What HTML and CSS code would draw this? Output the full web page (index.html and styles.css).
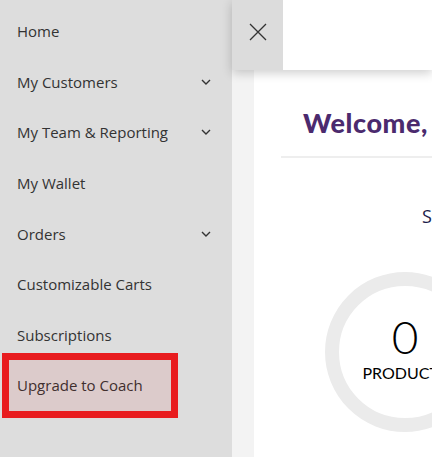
FILE: index.html
```html
<!DOCTYPE html>
<html>
<head>
<meta charset="utf-8">
<link rel="stylesheet" href="styles.css">
</head>
<body>
<div class="app">
  <nav class="sidebar">
    <div class="item">Home</div>
    <div class="item">My Customers<svg class="chev" viewBox="0 0 10 6"><path d="M1 1 L5 5 L9 1" /></svg></div>
    <div class="item">My Team &amp; Reporting<svg class="chev" viewBox="0 0 10 6"><path d="M1 1 L5 5 L9 1" /></svg></div>
    <div class="item">My Wallet</div>
    <div class="item">Orders<svg class="chev" viewBox="0 0 10 6"><path d="M1 1 L5 5 L9 1" /></svg></div>
    <div class="item">Customizable Carts</div>
    <div class="item">Subscriptions</div>
    <div class="item highlight">Upgrade to Coach</div>
  </nav>
  <div class="main">
    <header class="topbar">
      <div class="close">
        <svg viewBox="0 0 18 18" width="18" height="18"><path d="M1 1 L17 17 M17 1 L1 17" /></svg>
      </div>
      <div class="topfill"></div>
    </header>
    <div class="body">
      <div class="gutter"></div>
      <div class="content">
        <div class="card">
          <h1 class="welcome">Welcome,</h1>
          <div class="divider"></div>
          <div class="sub">S</div>
          <div class="ring">
            <div class="num">0</div>
            <div class="label">PRODUCTS</div>
          </div>
        </div>
      </div>
    </div>
  </div>
</div>
</body>
</html>
```
FILE: styles.css
```css
html, body {
  margin: 0;
  padding: 0;
  width: 432px;
  height: 457px;
  overflow: hidden;
  background: #fff;
}
.app {
  display: flex;
  height: 457px;
}
.sidebar {
  width: 232px;
  flex: 0 0 232px;
  background: #dddddd;
  padding-top: 6px;
  box-sizing: border-box;
}
.item {
  position: relative;
  height: 50.6px;
  display: flex;
  align-items: center;
  justify-content: space-between;
  padding: 0 21px 0 17px;
  font-family: "Open Sans", sans-serif;
  font-size: 15px;
  color: #333;
}
.chev {
  width: 10px;
  height: 6px;
  fill: none;
  stroke: #333;
  stroke-width: 1.4;
}
.highlight::after {
  content: "";
  position: absolute;
  left: 2px;
  top: -7px;
  width: 176px;
  height: 65px;
  box-sizing: border-box;
  border: 7px solid #e81c1f;
  background: rgba(220, 0, 0, 0.08);
}
.main {
  flex: 1;
  display: flex;
  flex-direction: column;
  min-width: 0;
}
.topbar {
  height: 70px;
  flex: 0 0 70px;
  display: flex;
  position: relative;
  z-index: 2;
  box-shadow: 0 3px 10px rgba(0,0,0,0.2);
}
.close {
  width: 51px;
  background: #dcdcdc;
  display: flex;
  align-items: center;
  justify-content: center;
  padding-bottom: 6px;
  box-sizing: border-box;
}
.close svg {
  fill: none;
  stroke: #333;
  stroke-width: 1.3;
}
.topfill {
  flex: 1;
  background: #fff;
}
.body {
  flex: 1;
  display: flex;
  min-height: 0;
}
.gutter {
  width: 22px;
  background: #f3f3f3;
}
.content {
  flex: 1;
  background: #fff;
  padding-left: 27px;
  overflow: hidden;
}
.card {
  width: 300px;
}
.welcome {
  margin: 37px 0 0 22px;
  font-family: "Lato", sans-serif;
  font-weight: 900;
  font-size: 27px;
  line-height: 32px;
  color: #4b2a6e;
  letter-spacing: 0.6px;
}
.divider {
  margin-top: 17px;
  height: 2px;
  background: #eeeeee;
}
.sub {
  margin: 46px 0 0 141px;
  font-family: "Open Sans", sans-serif;
  font-size: 18px;
  color: #1c1c4a;
  line-height: 24px;
}
.ring {
  margin: 44px 0 0 44px;
  width: 160px;
  height: 160px;
  box-sizing: border-box;
  border: 14px solid #ebebeb;
  border-radius: 50%;
  display: flex;
  flex-direction: column;
  align-items: center;
  justify-content: center;
  font-family: "Lato", sans-serif;
  color: #000;
}
.num {
  font-size: 46px;
  font-weight: 300;
  line-height: 46px;
  margin-top: -8px;
}
.label {
  font-size: 16px;
  line-height: 18px;
  margin-top: 4px;
}
```
